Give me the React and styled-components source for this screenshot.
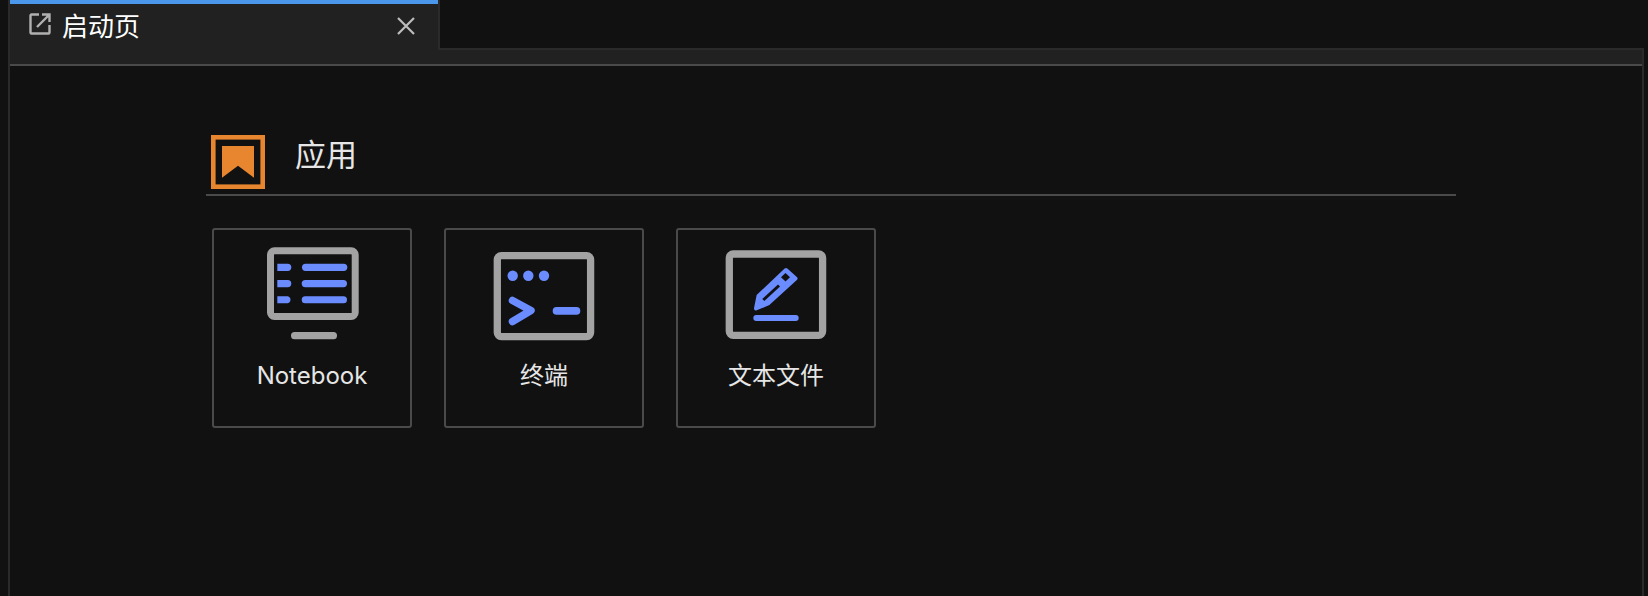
import React from "react";
import styled, { createGlobalStyle } from "styled-components";

const GlobalStyle = createGlobalStyle`
  html, body {
    margin: 0;
    padding: 0;
    height: 100%;
    background: #111111;
  }
  #root {
    height: 100%;
  }
`;

const Page = styled.div`
  box-sizing: border-box;
  width: 1648px;
  height: 596px;
  overflow: hidden;
  padding: 0 4px 0 8px;
  background: #111111;
  color: #e6e6e6;
  font-family: Inter, "Noto Sans CJK SC", sans-serif;
`;

const Panel = styled.div`
  box-sizing: border-box;
  height: 100%;
  border-left: 2px solid #2a2a2a;
  border-right: 2px solid #2a2a2a;
  display: flex;
  flex-direction: column;
`;

const TabBar = styled.div`
  display: flex;
  box-sizing: border-box;
  height: 66px;
  flex: none;
  background: #212121;
  border-bottom: 2px solid #4a4a4a;
`;

const Tab = styled.div`
  box-sizing: border-box;
  width: 428px;
  height: 64px;
  flex: none;
  border-top: 4px solid #4a97ec;
  display: flex;
  align-items: flex-start;
  padding: 7px 23px 0 19px;
  color: #ffffff;
  font-size: 26px;
  line-height: 32px;
`;

const TabLabel = styled.span`
  margin-left: 11px;
  flex: 1;
`;

const TabIcon = styled.svg`
  width: 22px;
  height: 22px;
  margin-top: 2px;
  flex: none;
  fill: none;
  stroke: #b0b0b0;
  stroke-width: 2.4;
`;

const TabClose = styled.svg`
  width: 18px;
  height: 18px;
  margin-top: 6px;
  flex: none;
  fill: none;
  stroke: #bdbdbd;
  stroke-width: 2.2;
`;

// the empty part of the bar, it also hides the panel border above the strip
const TabRest = styled.div`
  flex: 1;
  height: 50px;
  margin-right: -2px;
  box-sizing: border-box;
  background: #111111;
  border-left: 2px solid #2a2a2a;
  border-bottom: 2px solid #2a2a2a;
`;

const Content = styled.div`
  padding: 69px 186px 0 196px;
`;

const SectionHeader = styled.div`
  display: flex;
  align-items: flex-start;
  height: 54px;
  padding: 0 0 5px 5px;
  border-bottom: 2px solid #4a4a4a;
`;

const SectionIcon = styled.svg`
  width: 54px;
  height: 54px;
  flex: none;
`;

const SectionTitle = styled.h2`
  margin: 0 0 0 30px;
  font-size: 31px;
  font-weight: 400;
  line-height: 40px;
  color: #e6e6e6;
`;

const CardGrid = styled.div`
  display: flex;
  gap: 32px;
  padding: 32px 0 0 6px;
`;

const Card = styled.div`
  box-sizing: border-box;
  width: 200px;
  height: 200px;
  border: 2px solid #4a4a4a;
  border-radius: 3px;
  display: flex;
  flex-direction: column;
  align-items: center;
  padding-top: 10px;
`;

const CardIcon = styled.svg`
  width: 120px;
  height: 104px;
  flex: none;
`;

const CardLabel = styled.div`
  margin-top: 16px;
  font-size: 24px;
  line-height: 32px;
  color: #e6e6e6;
`;

const GREY = "#a3a3a3";
const BLUE = "#6a8cff";

const NotebookIcon = () => (
  <CardIcon viewBox="0 0 120 104">
    <rect x="18.5" y="10.8" width="84.7" height="65.7" rx="4" fill="none" stroke={GREY} strokeWidth="7" />
    <rect x="39" y="92" width="46" height="7.3" rx="3.6" fill={GREY} />
    <path d="M25.3 23.7h10.4a3.6 3.6 0 0 1 0 7.2H25.3z" fill={BLUE} />
    <path d="M25.3 40h10.4a3.6 3.6 0 0 1 0 7.2H25.3z" fill={BLUE} />
    <path d="M25.3 56.3h10.4a3.6 3.6 0 0 1 0 7H25.3z" fill={BLUE} />
    <rect x="50" y="23.7" width="45.3" height="7.2" rx="3.6" fill={BLUE} />
    <rect x="49.7" y="40" width="45.3" height="7.2" rx="3.6" fill={BLUE} />
    <rect x="49.7" y="56.3" width="45.3" height="7" rx="3.5" fill={BLUE} />
  </CardIcon>
);

const TerminalIcon = () => (
  <CardIcon viewBox="0 0 120 104">
    <rect x="13.3" y="15.6" width="93.3" height="81" rx="4" fill="none" stroke={GREY} strokeWidth="7.3" />
    <circle cx="28.7" cy="35.7" r="5.2" fill={BLUE} />
    <circle cx="44.3" cy="35.7" r="5.2" fill={BLUE} />
    <circle cx="60" cy="35.7" r="5.2" fill={BLUE} />
    <path d="M28.5 60.5L47 70.5L28.5 81.5" fill="none" stroke={BLUE} strokeWidth="7.5" strokeLinecap="round" strokeLinejoin="round" />
    <rect x="68.7" y="67" width="27.6" height="7.7" rx="3.8" fill={BLUE} />
  </CardIcon>
);

const TextFileIcon = () => (
  <CardIcon viewBox="0 0 120 104">
    <rect x="13.3" y="14" width="93.3" height="81.3" rx="4" fill="none" stroke={GREY} strokeWidth="7.3" />
    <path d="M40 68.5L42.5 56L70 30L79.5 38.5L52 63.5z" fill={BLUE} stroke={BLUE} strokeWidth="4" strokeLinejoin="round" />
    <path d="M47.3 60L63 45.5" fill="none" stroke="#111111" strokeWidth="3" />
    <path d="M69.5 33L74 37.3L69.5 41.5L65 37.3z" fill="#111111" />
    <rect x="37.3" y="75" width="45.4" height="6" rx="3" fill={BLUE} />
  </CardIcon>
);

const cards = [
  { label: "Notebook", Icon: NotebookIcon },
  { label: "终端", Icon: TerminalIcon },
  { label: "文本文件", Icon: TextFileIcon },
];

export default function App() {
  return (
    <>
      <GlobalStyle />
      <Page>
        <Panel>
          <TabBar>
            <Tab>
              <TabIcon viewBox="0 0 22 22">
                <path d="M10 1.5H2.5a1 1 0 0 0-1 1v17a1 1 0 0 0 1 1h17a1 1 0 0 0 1-1V12" />
                <path d="M8 14L20 2M13 1.5h7.5V9" />
              </TabIcon>
              <TabLabel>启动页</TabLabel>
              <TabClose viewBox="0 0 18 18">
                <path d="M1 1L17 17M17 1L1 17" />
              </TabClose>
            </Tab>
            <TabRest />
          </TabBar>
          <Content>
            <SectionHeader>
              <SectionIcon viewBox="0 0 54 54">
                <rect x="2.3" y="2.3" width="49.4" height="49.4" fill="none" stroke="#e8852f" strokeWidth="4.6" />
                <path d="M11 11H43V42.7L27 30.7L11 42.7z" fill="#e8852f" />
              </SectionIcon>
              <SectionTitle>应用</SectionTitle>
            </SectionHeader>
            <CardGrid>
              {cards.map(({ label, Icon }) => (
                <Card key={label}>
                  <Icon />
                  <CardLabel>{label}</CardLabel>
                </Card>
              ))}
            </CardGrid>
          </Content>
        </Panel>
      </Page>
    </>
  );
}
